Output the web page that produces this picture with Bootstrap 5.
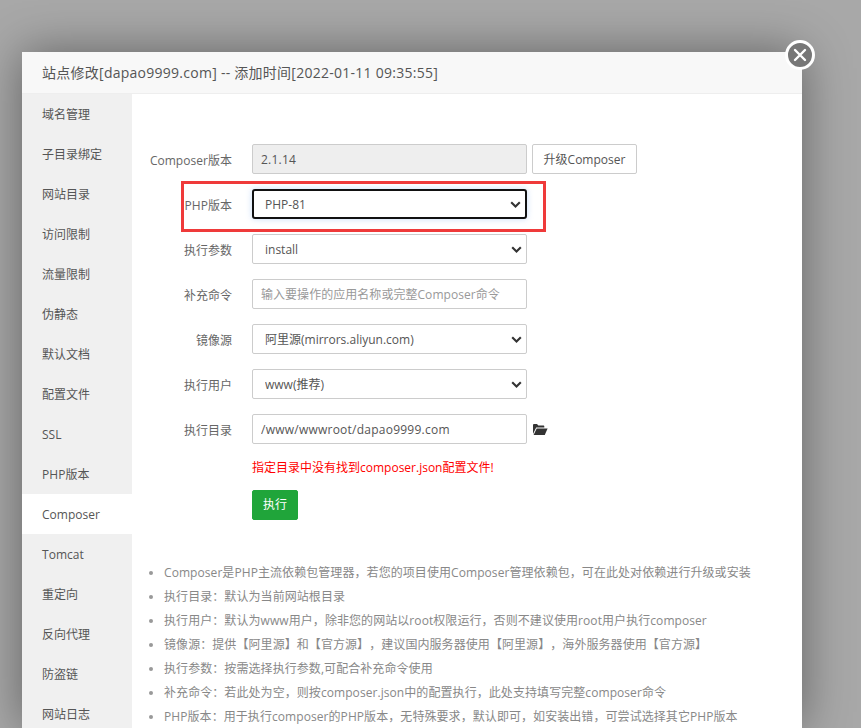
<!doctype html>
<html lang="zh">
<head>
<meta charset="utf-8">
<title>站点修改</title>
<link rel="stylesheet" href="https://cdn.jsdelivr.net/npm/bootstrap@5.3.0/dist/css/bootstrap.min.css">
<style>
html,body{height:100%;overflow:hidden}
body{background:#a8a8a8;font-family:"Open Sans","Noto Sans CJK SC",sans-serif;font-size:12px;color:#555;padding:52px 0 0 22px;text-spacing-trim:space-all;font-feature-settings:"chws" 0}
.dlg{width:780px;height:676px;overflow:visible;background:#fff;box-shadow:0 0 45px rgba(0,0,0,.42);position:relative}
.dlg-head{height:42px;background:#f8f8f8;border-bottom:1px solid #eee;padding-left:20px;font-size:14px;line-height:41px;color:#555;letter-spacing:.26px}
.dlg-x{position:absolute;top:-12px;right:-13px;width:30px;height:30px;border-radius:50%;background:#777;border:3px solid #fff;display:flex;align-items:center;justify-content:center}
.side{width:110px;background:#f0f0f0;flex:none;height:634px;overflow:hidden}
.side a{display:block;height:40px;line-height:42px;padding-left:20px;font-size:12px;color:#555;text-decoration:none;letter-spacing:.03px}
.side a.on{background:#fff}
.pane{padding:50px 0 0 17px;min-width:0;flex:1;height:634px;overflow:hidden}
.frow{height:30px;margin-bottom:15px;display:flex;align-items:center}
.flabel{width:83px;margin-right:20px;padding-top:3px;text-align:right;color:#666;flex:none;white-space:nowrap;letter-spacing:.03px}
.fctl{width:275px;height:30px;flex:none;font-size:12px;color:#555;border:1px solid #ccc;border-radius:2px;padding:1px 8px 0;min-height:0;line-height:28px;font-family:inherit;letter-spacing:.24px}
select.fctl{letter-spacing:0;padding:1px 30px 0 12px;background-image:url("data:image/svg+xml,%3Csvg xmlns='http://www.w3.org/2000/svg' viewBox='0 0 11 7'%3E%3Cpath d='M1.2 1.2 5.5 5.5 9.8 1.2' fill='none' stroke='%23333' stroke-width='2.1'/%3E%3C/svg%3E");background-position:right 4px center;background-size:11px 7px}
.fctl.form-control:disabled{background:#eee;color:#555;opacity:1}
.fctl::placeholder{color:#999;letter-spacing:.04px}
select.fctl.focused{border:2px solid #111;border-radius:3px;box-shadow:0 0 6px rgba(120,170,240,.4);padding:0 30px 0 11px}
.btn-up{margin-left:5px;height:30px;width:105px;padding:1px 0 0;font-size:12px;color:#555;background:#fff;border:1px solid #ccc;border-radius:2px;font-family:inherit}
.fold{margin-left:5px;flex:none}
.err{margin:-1px 0 0 103px;color:#f00;height:20px;line-height:20px}
.btn-run{margin:12px 0 0 103px;width:46px;height:30px;padding:0;font-size:12px;background:#20a53a;border:1px solid #20a53a;border-radius:2px;color:#fff;display:block;font-family:inherit}
.tips{margin:41px 0 0;padding:0 0 0 15px;color:#888;list-style:none;letter-spacing:.07px}
.tips li{height:24px;line-height:24px;white-space:nowrap;position:relative}
.tips li::before{content:"";position:absolute;left:-15px;top:10px;width:4px;height:4px;border-radius:50%;background:#999}
.mark-box{position:absolute;left:159px;top:129px;width:365px;height:51px;border:3px solid #ef3a3a;pointer-events:none}
</style>
</head>
<body>
<div class="dlg">
  <div class="dlg-x"><svg width="14" height="14" viewBox="0 0 14 14"><path d="M2 2 12 12M12 2 2 12" stroke="#fff" stroke-width="2.4" stroke-linecap="round"/></svg></div>
  <div class="dlg-head">站点修改[dapao9999.com] -- 添加时间[2022-01-11 09:35:55]</div>
  <div class="d-flex">
    <nav class="side">
      <a href="#">域名管理</a><a href="#">子目录绑定</a><a href="#">网站目录</a><a href="#">访问限制</a><a href="#">流量限制</a><a href="#">伪静态</a><a href="#">默认文档</a><a href="#">配置文件</a><a href="#">SSL</a><a href="#">PHP版本</a><a href="#" class="on">Composer</a><a href="#">Tomcat</a><a href="#">重定向</a><a href="#">反向代理</a><a href="#">防盗链</a><a href="#">网站日志</a>
    </nav>
    <main class="pane">
      <div class="frow"><label class="flabel">Composer版本</label><input class="form-control fctl" disabled value="2.1.14"><button class="btn btn-up" type="button">升级Composer</button></div>
      <div class="frow"><label class="flabel">PHP版本</label><select class="form-select fctl focused"><option>PHP-81</option></select></div>
      <div class="frow"><label class="flabel">执行参数</label><select class="form-select fctl"><option>install</option></select></div>
      <div class="frow"><label class="flabel">补充命令</label><input class="form-control fctl" placeholder="输入要操作的应用名称或完整Composer命令"></div>
      <div class="frow"><label class="flabel">镜像源</label><select class="form-select fctl"><option>阿里源(mirrors.aliyun.com)</option></select></div>
      <div class="frow"><label class="flabel">执行用户</label><select class="form-select fctl"><option>www(推荐)</option></select></div>
      <div class="frow"><label class="flabel">执行目录</label><input class="form-control fctl" value="/www/wwwroot/dapao9999.com"><svg class="fold" width="16" height="13" viewBox="0 0 16 13"><path d="M1 11V2.2C1 1.5 1.5 1 2.2 1H5l1.3 1.5h5c.6 0 1 .4 1 1V4.6H4.2L1 11Z" fill="#333"/><path d="M4.7 5.6H15.6L12.8 12H1.6Z" fill="#333"/></svg></div>
      <div class="err">指定目录中没有找到composer.json配置文件!</div>
      <button class="btn btn-run" type="button">执行</button>
      <ul class="tips">
        <li>Composer是PHP主流依赖包管理器，若您的项目使用Composer管理依赖包，可在此处对依赖进行升级或安装</li>
        <li>执行目录：默认为当前网站根目录</li>
        <li>执行用户：默认为www用户，除非您的网站以root权限运行，否则不建议使用root用户执行composer</li>
        <li>镜像源：提供【阿里源】和【官方源】，建议国内服务器使用【阿里源】，海外服务器使用【官方源】</li>
        <li>执行参数：按需选择执行参数,可配合补充命令使用</li>
        <li>补充命令：若此处为空，则按composer.json中的配置执行，此处支持填写完整composer命令</li>
        <li>PHP版本：用于执行composer的PHP版本，无特殊要求，默认即可，如安装出错，可尝试选择其它PHP版本</li>
      </ul>
    </main>
  </div>
  <div class="mark-box"></div>
</div>
<script src="https://cdn.jsdelivr.net/npm/bootstrap@5.3.0/dist/js/bootstrap.bundle.min.js"></script>
</body>
</html>
